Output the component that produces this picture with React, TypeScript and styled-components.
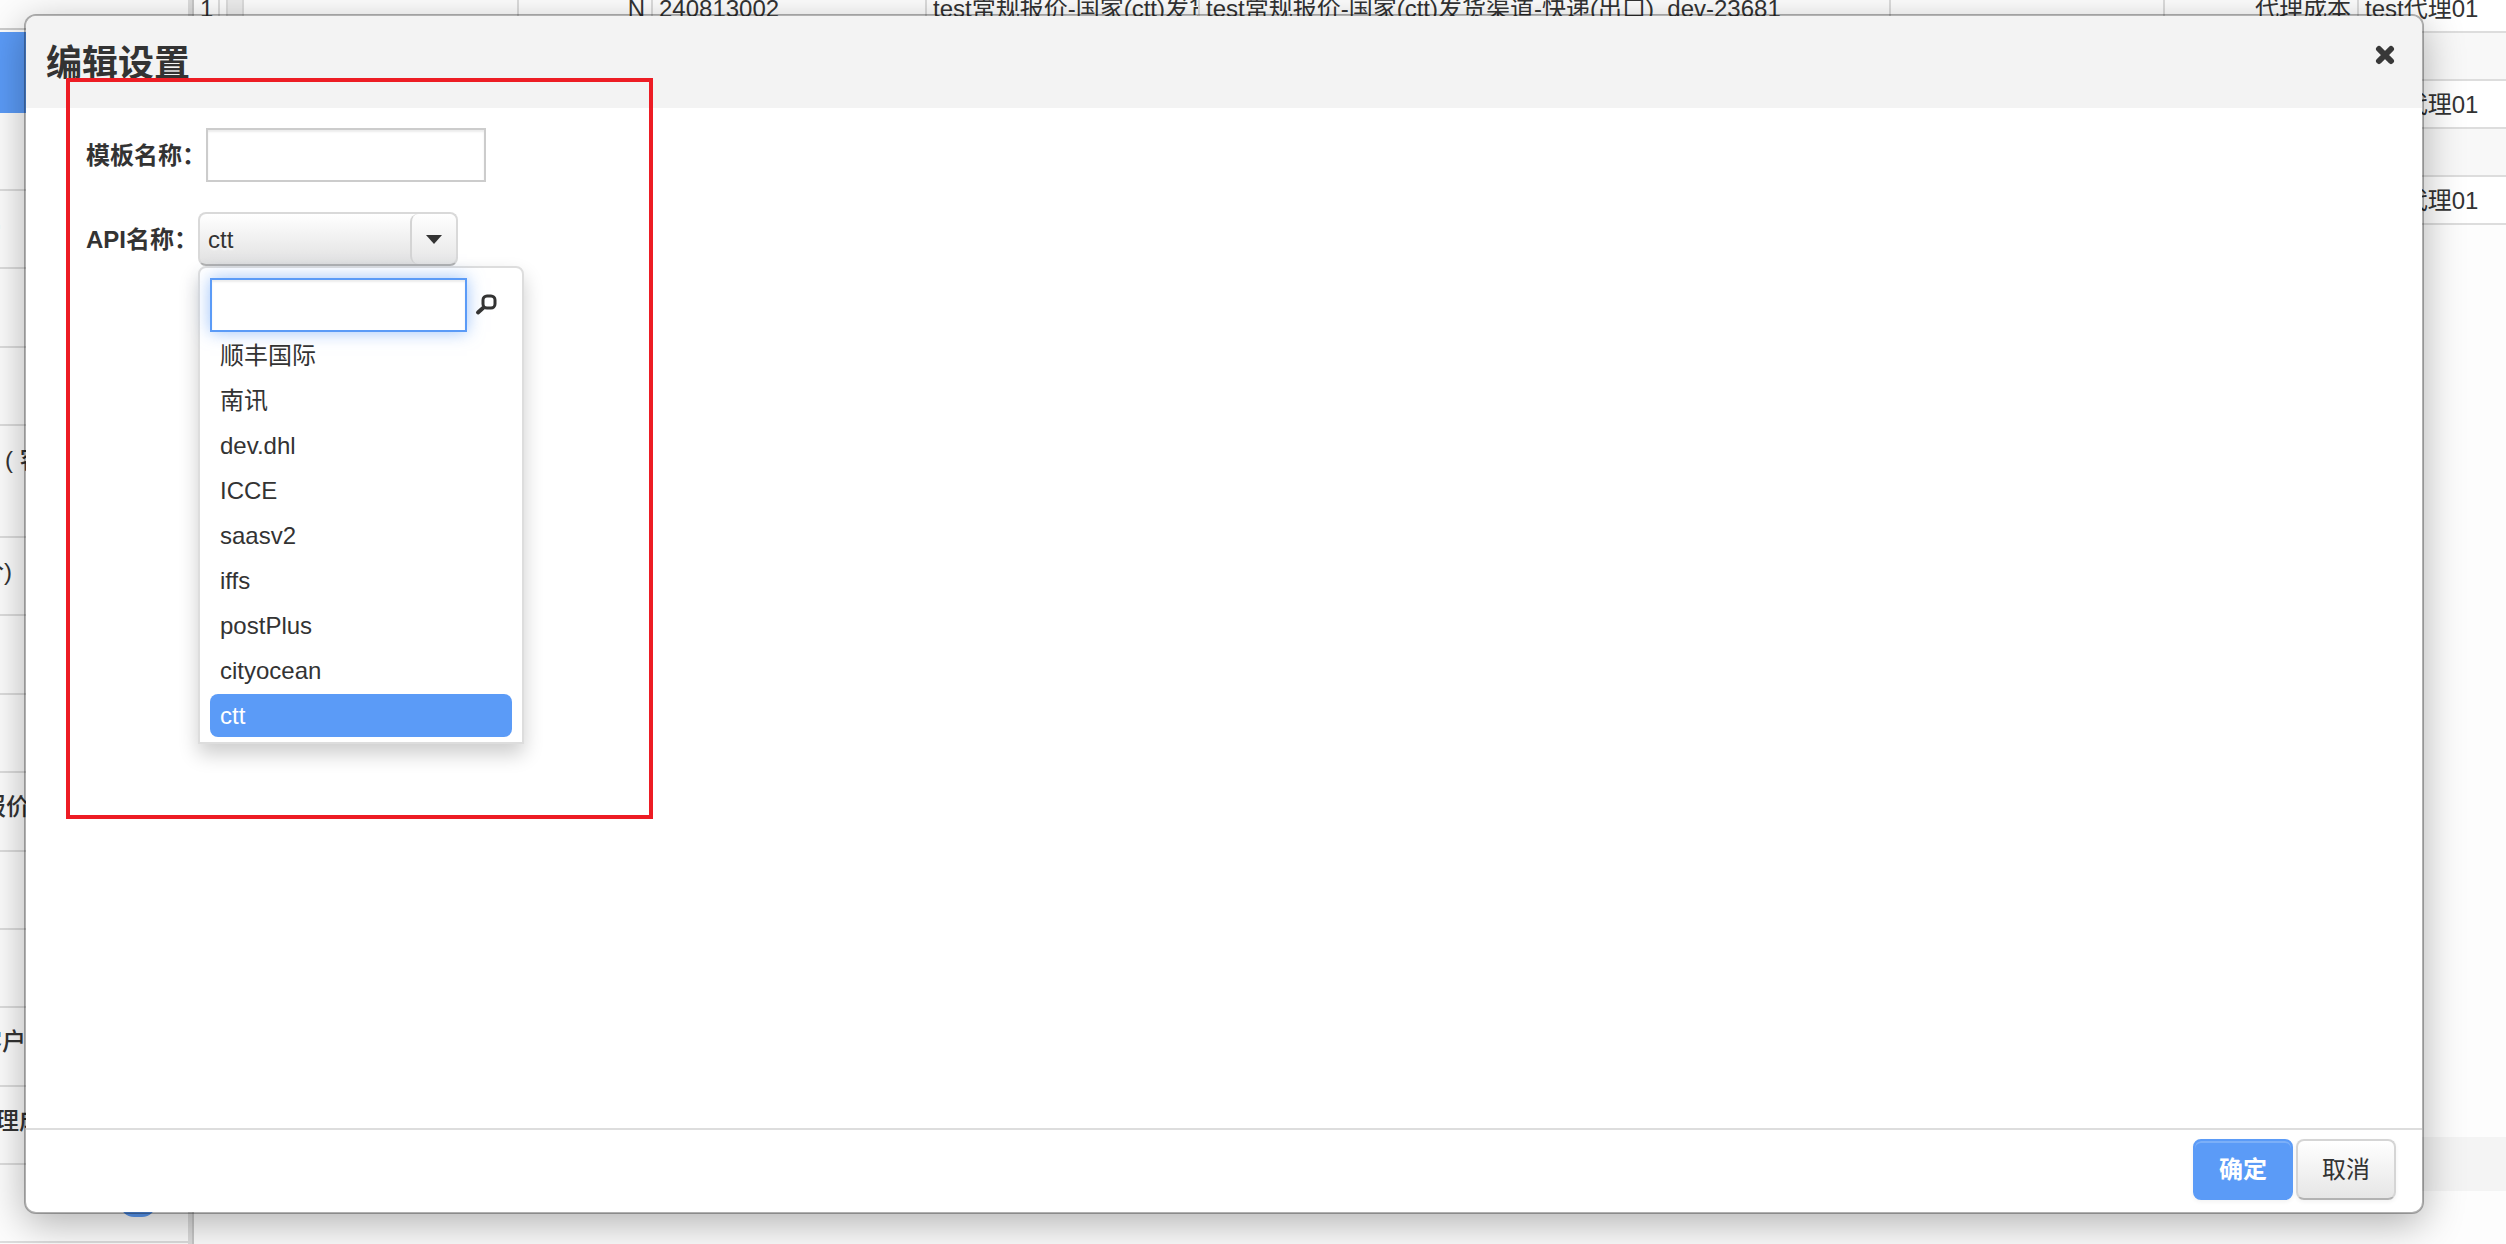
import React, { useState } from "react";
import styled, { createGlobalStyle } from "styled-components";

const GlobalStyle = createGlobalStyle`
  *, *::before, *::after { box-sizing: border-box; }
  body {
    margin: 0;
    background: #fff;
    color: #333;
    font-family: "Liberation Sans", "Noto Sans CJK SC", sans-serif;
    font-size: 24px;
    line-height: 36px;
  }
  button, input, select { font: inherit; color: inherit; }
`;

const Page = styled.div`
  position: relative;
  display: flex;
  height: 100vh;
  overflow: hidden;
  background: #fdfdfd;
`;

/* ---- page behind the dialog ---- */

const Sidebar = styled.nav`
  flex: 0 0 194px;
  display: flex;
  overflow: hidden;
  border-right: 2px solid #c8c8c8;
`;

const Splitter = styled.div`
  flex: 0 0 4px;
  background: #ddd;
`;

const SideList = styled.ul`
  flex: 1;
  min-width: 0;
  margin: 0;
  padding: 28px 0 0;
  list-style: none;
`;

const SideHead = styled.li`
  height: 85px;
  border-top: 2px solid #ccc;
  padding-top: 2px;
  background: #5b9bf7 content-box;
`;

const SideItem = styled.li<{ $height: number; $indent: number }>`
  display: flex;
  align-items: flex-start;
  height: ${(p) => p.$height}px;
  padding-top: 16px;
  border-bottom: 2px solid #ddd;
  overflow: hidden;
  white-space: pre;
  font-weight: 500;
  text-indent: ${(p) => p.$indent}px;
`;

const Badge = styled.span`
  width: 36px;
  height: 36px;
  margin-left: 120px;
  border-radius: 14px;
  background: #5b9bf7;
`;

const Main = styled.main`
  flex: 1;
  min-width: 0;
  display: flex;
  flex-direction: column;
  overflow: hidden;
`;

const Grid = styled.table`
  width: 100%;
  margin-top: -15px;
  table-layout: fixed;
  border-collapse: separate;
  border-spacing: 0;
  background: #fff;
`;

const GridRow = styled.tr<{ $group?: boolean }>`
  background: ${(p) => (p.$group ? "#f8f8f8" : "#fff")};
`;

const Cell = styled.td<{ $right?: boolean; $fill?: boolean; $plain?: boolean }>`
  height: 48px;
  padding: 2px 6px 0;
  border-right: ${(p) => (p.$plain ? "0" : "2px solid #ddd")};
  border-bottom: 2px solid #ddd;
  background: ${(p) => (p.$fill ? "#eee" : "transparent")};
  text-align: ${(p) => (p.$right ? "right" : "left")};
  white-space: nowrap;
  overflow: hidden;
`;

const GridFooter = styled.div`
  height: 54px;
  margin: auto 0 53px;
  background: #f4f4f4;
`;

/* ---- dialog ---- */

const Dialog = styled.section`
  position: absolute;
  inset: 14px 82px 30px 24px;
  display: flex;
  flex-direction: column;
  border: 2px solid rgba(0, 0, 0, 0.3);
  border-radius: 12px;
  background: #fff;
  background-clip: padding-box;
  box-shadow: 0 10px 40px rgba(0, 0, 0, 0.3);
`;

const DialogHeader = styled.header`
  display: flex;
  justify-content: space-between;
  align-items: flex-start;
  height: 92px;
  padding: 20px 22px 20px 20px;
  border-radius: 10px 10px 0 0;
  background: #f3f3f3;
`;

const Title = styled.h1`
  margin: 0;
  font-size: 36px;
  line-height: 56px;
`;

const CloseButton = styled.button`
  display: flex;
  padding: 5px;
  margin: 4px 0 0;
  border: 0;
  background: none;
`;

const DialogBody = styled.div`
  flex: 1;
  display: flex;
  flex-direction: column;
  align-items: flex-start;
  gap: 30px;
  padding: 20px 60px;
`;

const Field = styled.div`
  display: flex;
  align-items: center;
  height: 54px;
`;

const Label = styled.label`
  padding-top: 2px;
  font-weight: 700;
  white-space: nowrap;
`;

const TextInput = styled.input<{ $active?: boolean }>`
  width: ${(p) => (p.$active ? "257px" : "280px")};
  height: 54px;
  padding: 0 8px;
  border: 2px solid ${(p) => (p.$active ? "#5b9bf7" : "#ccc")};
  outline: 0;
  background: #fff;
  box-shadow: inset 0 2px 2px rgba(0, 0, 0, 0.08)
    ${(p) => (p.$active ? ", 0 0 16px rgba(91, 155, 247, 0.6)" : "")};
`;

const Combo = styled.div`
  position: relative;
`;

const ComboSelect = styled.select`
  display: block;
  width: 260px;
  height: 54px;
  padding: 2px 8px 0;
  appearance: none;
  border: 2px solid #d9d9d9;
  border-bottom-color: #b3b3b3;
  border-radius: 8px;
  outline: 0;
  background: linear-gradient(#fff, #e1e1e1);
  text-shadow: 0 2px 2px rgba(255, 255, 255, 0.75);
`;

const ComboArrow = styled.span`
  position: absolute;
  top: 2px;
  right: 2px;
  bottom: 2px;
  display: flex;
  align-items: center;
  justify-content: center;
  width: 46px;
  border-left: 2px solid #d4d4d4;
  border-radius: 8px;
  background: linear-gradient(#fff, #e6e6e6);
  pointer-events: none;
`;

const Caret = styled.i`
  border: 8px solid transparent;
  border-top: 9px solid #333;
  border-bottom: 0;
`;

const Popup = styled.div`
  position: absolute;
  top: 100%;
  left: 0;
  width: 326px;
  padding: 10px 10px 5px;
  border: 2px solid #ddd;
  border-radius: 8px 8px 0 0;
  background: #fff;
  box-shadow: 0 10px 20px rgba(0, 0, 0, 0.2);
`;

const SearchRow = styled.div`
  display: flex;
  align-items: center;
  gap: 8px;
`;

const SearchButton = styled.button`
  display: flex;
  padding: 0;
  border: 0;
  background: none;
`;

const Options = styled.ul`
  display: flex;
  flex-direction: column;
  gap: 2px;
  margin: 0;
  padding: 2px 0 0;
  list-style: none;
`;

const Option = styled.button<{ $selected: boolean }>`
  display: block;
  width: 100%;
  height: 43px;
  padding: 0 10px;
  border: 0;
  border-radius: 8px;
  background: ${(p) => (p.$selected ? "#5b9bf7" : "transparent")};
  color: ${(p) => (p.$selected ? "#fff" : "#333")};
  text-align: left;
`;

const DialogFooter = styled.footer`
  display: flex;
  justify-content: flex-end;
  gap: 3px;
  height: 84px;
  padding: 9px 26px;
  border-top: 2px solid #ddd;
`;

const ActionButton = styled.button<{ $primary?: boolean }>`
  width: 100px;
  height: 61px;
  padding: 0;
  border: 2px solid ${(p) => (p.$primary ? "#5b9bf7" : "#d5d5d5")};
  border-bottom-color: ${(p) => (p.$primary ? "#5b9bf7" : "#b3b3b3")};
  border-radius: 8px;
  background: ${(p) => (p.$primary ? "#5b9bf7" : "linear-gradient(#fff, #e6e6e6)")};
  color: ${(p) => (p.$primary ? "#fff" : "#333")};
  font-weight: ${(p) => (p.$primary ? 700 : 400)};
  box-shadow: inset 0 2px 0 rgba(255, 255, 255, 0.2), 0 2px 4px rgba(0, 0, 0, 0.05);
`;

const Marker = styled.div`
  position: absolute;
  top: 78px;
  left: 66px;
  width: 587px;
  height: 741px;
  border: 4px solid #ed1c24;
  pointer-events: none;
`;

type SideEntry = { height: number; text?: string; indent?: number; badge?: boolean };

const sideEntries: SideEntry[] = [
  { height: 78 },
  { height: 78, text: ")", indent: -7 },
  { height: 79 },
  { height: 78 },
  { height: 112, text: "( 客", indent: 5 },
  { height: 78, text: "价)", indent: -20 },
  { height: 79 },
  { height: 78 },
  { height: 79, text: "报价", indent: -18 },
  { height: 78 },
  { height: 78 },
  { height: 79, text: "客户", indent: -22 },
  { height: 78, text: "理成", indent: -5 },
  { height: 78, badge: true },
];

const columns = [26, 8, 16, 275, 134, 274, 273, 691, 274, 194];

const apiNames = ["顺丰国际", "南讯", "dev.dhl", "ICCE", "saasv2", "iffs", "postPlus", "cityocean", "ctt"];

const quote = "test常规报价-国家(ctt)发货渠道-快递(出口)_dev-23681";

export default function App() {
  const [api, setApi] = useState("ctt");
  const [name, setName] = useState("");
  const [query, setQuery] = useState("");

  return (
    <>
      <GlobalStyle />
      <Page>
        <Sidebar>
          <SideList>
            <SideHead />
            {sideEntries.map((entry, i) => (
              <SideItem key={i} $height={entry.height} $indent={entry.indent ?? 0}>
                {entry.badge ? <Badge /> : entry.text}
              </SideItem>
            ))}
          </SideList>
          <Splitter />
        </Sidebar>
        <Main>
          <Grid>
            <colgroup>
              {columns.map((width, i) => (
                <col key={i} style={{ width }} />
              ))}
              <col />
            </colgroup>
            <tbody>
              <GridRow>
                <Cell $right>1</Cell>
                <Cell />
                <Cell $fill />
                <Cell />
                <Cell $right>N</Cell>
                <Cell>240813002</Cell>
                <Cell>{quote}</Cell>
                <Cell>{quote}</Cell>
                <Cell />
                <Cell $right>代理成本</Cell>
                <Cell $plain>test代理01</Cell>
              </GridRow>
              {[0, 1].map((n) => (
                <React.Fragment key={n}>
                  <GridRow $group>
                    <Cell colSpan={11} $plain />
                  </GridRow>
                  <GridRow>
                    <Cell colSpan={10} />
                    <Cell $plain>test代理01</Cell>
                  </GridRow>
                </React.Fragment>
              ))}
            </tbody>
          </Grid>
          <GridFooter />
        </Main>

        <Dialog role="dialog" aria-labelledby="dialog-title">
          <DialogHeader>
            <Title id="dialog-title">编辑设置</Title>
            <CloseButton aria-label="关闭">
              <svg width="20" height="20" viewBox="0 0 20 20">
                <path d="M4 4 16 16M16 4 4 16" stroke="#383838" strokeWidth="6" strokeLinecap="round" />
              </svg>
            </CloseButton>
          </DialogHeader>
          <DialogBody>
            <Field>
              <Label htmlFor="template-name">模板名称：</Label>
              <TextInput id="template-name" value={name} onChange={(e) => setName(e.target.value)} />
            </Field>
            <Field>
              <Label htmlFor="api-name">API名称：</Label>
              <Combo>
                <ComboSelect id="api-name" value={api} onChange={(e) => setApi(e.target.value)}>
                  {apiNames.map((item) => (
                    <option key={item}>{item}</option>
                  ))}
                </ComboSelect>
                <ComboArrow>
                  <Caret />
                </ComboArrow>
                <Popup>
                  <SearchRow>
                    <TextInput
                      $active
                      aria-label="搜索"
                      value={query}
                      onChange={(e) => setQuery(e.target.value)}
                    />
                    <SearchButton aria-label="搜索">
                      <svg width="22" height="22" viewBox="0 0 22 22" fill="none" stroke="#333">
                        <rect x="8" y="2" width="12" height="12" rx="4" strokeWidth="3" />
                        <path d="M8 14 3 18.5" strokeWidth="4" strokeLinecap="round" />
                      </svg>
                    </SearchButton>
                  </SearchRow>
                  <Options>
                    {apiNames
                      .filter((item) => item.includes(query))
                      .map((item) => (
                        <li key={item}>
                          <Option $selected={item === api} onClick={() => setApi(item)}>
                            {item}
                          </Option>
                        </li>
                      ))}
                  </Options>
                </Popup>
              </Combo>
            </Field>
          </DialogBody>
          <DialogFooter>
            <ActionButton $primary>确定</ActionButton>
            <ActionButton>取消</ActionButton>
          </DialogFooter>
        </Dialog>
        <Marker />
      </Page>
    </>
  );
}
